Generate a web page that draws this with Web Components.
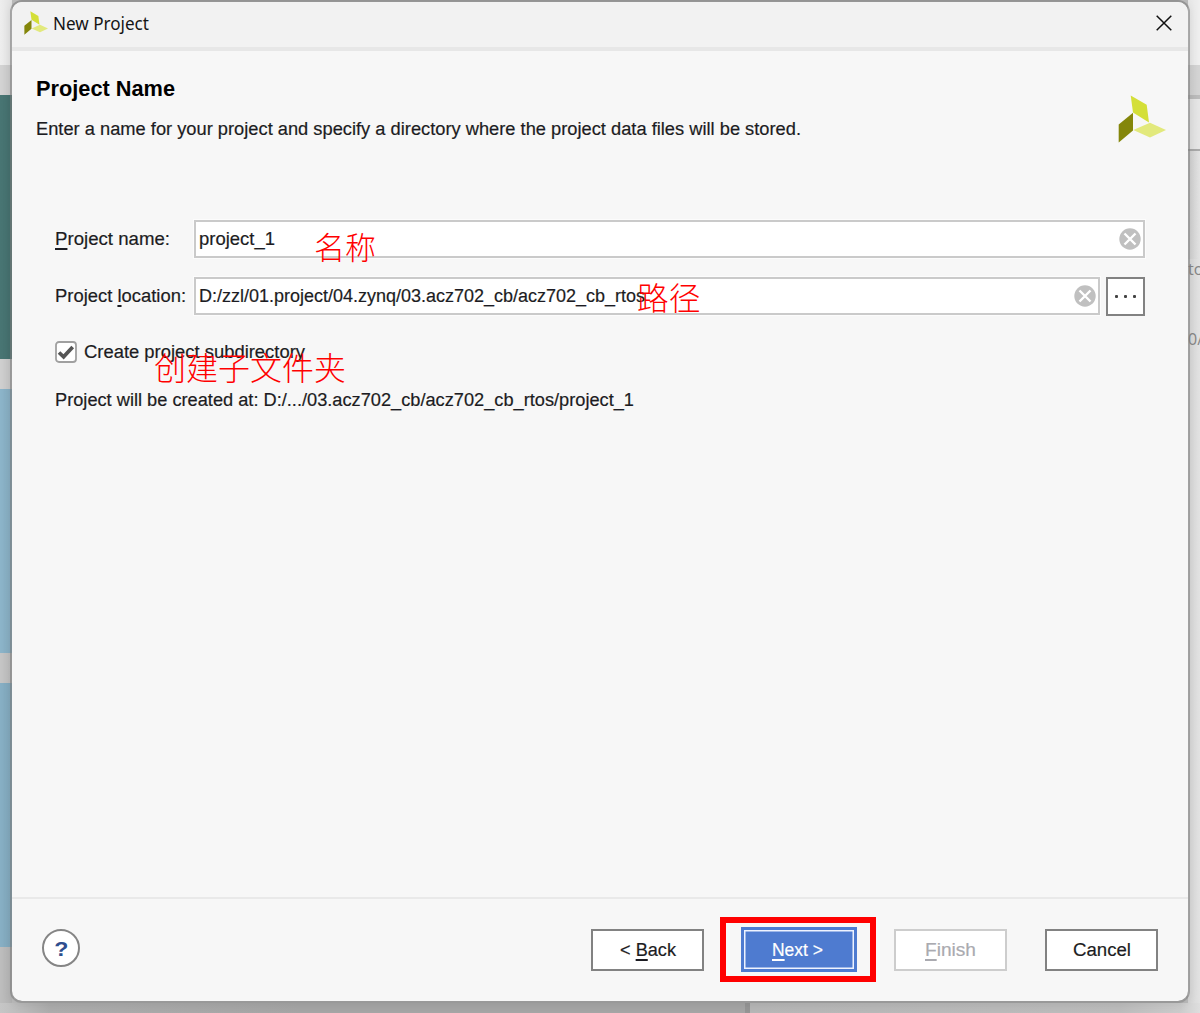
<!DOCTYPE html>
<html lang="en">
<head>
<meta charset="utf-8">
<title>New Project</title>
<style>
html,body{margin:0;width:1200px;height:1013px;overflow:hidden;background:#bbb;font-family:"Liberation Sans",sans-serif}
</style>
</head>
<body>
<project-wizard></project-wizard>
<script>
const define = (name, html, init) => customElements.define(name, class extends HTMLElement {
  connectedCallback() {
    if (this.shadowRoot) return;
    const root = this.attachShadow({mode: 'open'});
    root.innerHTML = html;
    if (init) init.call(this, root);
  }
});

/* Text run condensed or widened to occupy a given width. */
define('fit-text', `<style>
:host{display:inline-block;white-space:pre;font-size:19.2px;line-height:22px;color:#1c1c22;flex:none;-webkit-text-stroke:.2px currentColor}
span{display:inline-block;white-space:pre;transform-origin:0 50%}
</style><span><slot></slot></span>`, function (root) {
  const w = +this.getAttribute('w'), s = root.querySelector('span');
  s.style.transform = 'scaleX(' + w / s.getBoundingClientRect().width + ')';
  this.style.width = w + 'px';
});

define('brand-mark', `<style>:host{display:block;flex:none}svg{display:block;width:100%;height:100%}</style>
<svg viewBox="0 0 48 48" preserveAspectRatio="none"><path fill="#d4df38" d="M10.2 .2Z M12.7 .5 28.7 9.8 31 27.5 15 17.5Z"/><path fill="#84860a" d="M.7 29.5 15 17.8V35.5L.7 47.5Z"/><path fill="#e2e97c" d="M15.3 35 32 27.7 48 35 32 42.5Z"/></svg>`);

define('title-bar', `<style>
:host{display:flex;align-items:center;box-sizing:border-box;height:49px;padding:0 16.5px 3px 12px;background:#f2f2f2;border-bottom:4px solid #e7e7e7}
brand-mark{width:24px;height:24px;margin:-1px 5.5px 0 -.5px}
fit-text{font-family:"Noto Sans","Open Sans",sans-serif;font-size:17.6px;line-height:24px;color:#151515;-webkit-text-stroke:0}
.x{margin-left:auto;width:16px;height:16px}
</style><brand-mark></brand-mark><fit-text w="96"><slot></slot></fit-text>
<svg class="x" viewBox="0 0 16 16"><path d="M.7.7 15.3 15.3M15.3.7.7 15.3" stroke="#111" stroke-width="1.5"/></svg>`);

define('text-field', `<style>
:host{display:flex;flex:1;align-items:center;box-sizing:border-box;height:38px;border:2px solid #cacaca;background:#fff;padding:0 2px 0 3px;box-shadow:0 0 0 1px #fcfcfc}
svg{width:22px;height:22px;margin-left:auto}
</style><slot></slot><svg viewBox="0 0 22 22"><circle cx="11" cy="11" r="10.7" fill="#c0c0c0"/><path d="M5.5 5.5l11 11m0-11l-11 11" stroke="#fff" stroke-width="2.4"/></svg>`);

define('field-row', `<style>
:host{display:flex;align-items:center;height:38px}
.l{width:138px;flex:none;display:flex}
</style><div class="l"><slot name="label"></slot></div><slot></slot>`);

define('check-box', `<style>
:host{display:flex;align-items:center;gap:7px}
svg{width:22px;height:22px;margin-top:1px}
</style><svg viewBox="0 0 22 22"><rect x="1" y="1" width="20" height="20" rx="3" fill="#fff" stroke="#a0a0a0" stroke-width="1.8"/><path d="M4 11.5 8.6 15.8 17.7 6" fill="none" stroke="#555" stroke-width="3.7"/></svg><slot></slot>`);

define('push-button', `<style>
:host{display:flex;align-items:center;justify-content:center;box-sizing:border-box;width:113px;height:42px;border:2px solid #828282;background:#fff;flex:none}
:host([disabled]){border-color:#cdcdcd}
:host([primary]){width:116px;height:45px;border:3px solid #4e7bd0;background:#4e7bd0;box-shadow:inset 0 0 0 1.5px #eef3ff}
:host([browse]){width:39px;height:39px;margin-left:6px}
</style><slot></slot>`);

define('help-button', `<style>
:host{display:flex;align-items:center;justify-content:center;box-sizing:border-box;width:38px;height:38px;border:2px solid #858585;border-radius:50%;background:#fff;color:#2f4e8e;font:bold 21px/32px "Liberation Sans",sans-serif}
span{display:block;transform:scaleX(1.1);margin-top:2px}
</style><span>?</span>`);

define('desktop-strips', `<style>
:host{display:flex;flex-direction:column;width:1200px;height:1013px}
.top{display:flex;height:1003px;justify-content:space-between}
.left,.right{display:flex;flex-direction:column;width:12px}
.left i,.right i{display:block;flex:none;background-image:linear-gradient(90deg,transparent,rgba(0,0,0,.055))}
.right i{background-image:linear-gradient(90deg,rgba(0,0,0,.04),transparent)}
.right{overflow:hidden;background:linear-gradient(90deg,#d4d4d4,#e2e2e2)}
.right span{display:block;height:70px;font:16px/20px "Open Sans",sans-serif;color:#858585;white-space:pre}
.bottom{display:flex;height:10px}
.bottom b{display:block}
</style>
<div class="top"><div class="left">
<i style="height:65px;background-color:#eee"></i><i style="height:30px;background-color:#d3d3d3"></i><i style="height:264px;background-color:#487573"></i><i style="height:30px;background-color:#cfcfcf"></i><i style="height:264px;background-color:#8cb4c9"></i><i style="height:30px;background-color:#c5c5c5"></i><i style="height:264px;background-color:#87afc4"></i><i style="height:56px;background-color:#bdbdbd"></i>
</div><div class="right"><i style="height:65px;background-color:#efefef"></i><i style="height:30px;background-color:#d4d4d4"></i><i style="height:4px;background-color:#bcbcbc"></i><i style="height:50px;background-color:#e6e6e6"></i><i style="height:2px;background-color:#aaa"></i><i style="height:108px"></i><span>to</span><span>0/</span></div></div>
<div class="bottom"><b style="width:745px;background:linear-gradient(90deg,#c6c6c6,#acacac 50px,#a5a5a5 300px,#a5a5a5)"></b><b style="width:5px;background:#959595"></b><b style="flex:1;background:linear-gradient(90deg,#b6b6b6,#bcbcbc 370px,#cbcbcb 430px,#dedede)"></b></div>`);

define('annotation-label', `<style>
:host{position:absolute;font:300 31.7px/36px "Noto Sans CJK SC",sans-serif;color:#f00;white-space:pre}
</style><slot></slot>`);

define('project-wizard', `<style>
:host{display:block;position:relative;width:1200px;height:1013px;overflow:hidden}
u{text-decoration-thickness:1.5px;text-underline-offset:2.5px;text-decoration-skip-ink:none}
.dialog{position:absolute;left:10px;top:0;width:1180px;height:1003px;box-sizing:border-box;border:2px solid rgba(125,125,125,.58);border-bottom-color:#999;border-radius:12px;background:#f7f7f7;background-clip:padding-box;display:flex;flex-direction:column;overflow:hidden;box-shadow:0 2px 8px rgba(0,0,0,.08)}
.head{display:flex;justify-content:space-between;height:169px;padding:0 22px 0 24px}
.copy{display:flex;flex-direction:column;padding-top:26px;gap:17px}
.copy .h{font-weight:bold;font-size:21.3px;line-height:24px;color:#000;-webkit-text-stroke:0}
.head brand-mark{width:48px;height:48px;margin-top:44px}
.form{flex:1;display:flex;flex-direction:column;padding:0 43px}
field-row text-field{margin-left:.5px}
.form .second{margin-top:19px}
check-box{margin-top:25px}
.path{margin-top:26px}
.foot{height:104px;box-sizing:border-box;border-top:2px solid #e9e9e9;display:flex;align-items:center;padding:0 30px 1px}
.buttons{margin-left:auto;display:flex;align-items:center}
.mark{box-sizing:border-box;width:156px;height:65px;border:6px solid #f00;display:flex;justify-content:center;align-items:center;margin:0 18px 0 16px;padding-left:1px}
.help{margin-top:-4px}
.dots{display:flex;gap:6px}.dots i{width:3px;height:3px;background:#444;border-radius:1px}
.dim{color:#aaaab0}.lite{color:#fff;margin-right:3px}
</style>
<desktop-strips></desktop-strips>
<section class="dialog">
<title-bar>New Project</title-bar>
<header class="head"><div class="copy"><fit-text class="h" w="139">Project Name</fit-text><fit-text w="765">Enter a name for your project and specify a directory where the project data files will be stored.</fit-text></div><brand-mark></brand-mark></header>
<main class="form">
<field-row><fit-text slot="label" w="115"><u>P</u>roject name:</fit-text><text-field><fit-text w="76">project_1</fit-text></text-field></field-row>
<field-row class="second"><fit-text slot="label" w="131">Project <u>l</u>ocation:</fit-text><text-field><fit-text w="446">D:/zzl/01.project/04.zynq/03.acz702_cb/acz702_cb_rtos</fit-text></text-field><push-button browse><div class="dots"><i></i><i></i><i></i></div></push-button></field-row>
<check-box><fit-text w="221">Create project subdirectory</fit-text></check-box>
<fit-text class="path" w="579">Project will be created at: D:/.../03.acz702_cb/acz702_cb_rtos/project_1</fit-text>
</main>
<footer class="foot"><help-button class="help"></help-button><div class="buttons">
<push-button><fit-text w="56">&lt; <u>B</u>ack</fit-text></push-button>
<div class="mark"><push-button primary><fit-text class="lite" w="51"><u>N</u>ext &gt;</fit-text></push-button></div>
<push-button disabled><fit-text class="dim" w="51" style="margin-right:1px"><u>F</u>inish</fit-text></push-button>
<push-button style="margin-left:38px"><fit-text w="58">Cancel</fit-text></push-button>
</div></footer>
</section>
<annotation-label style="left:314px;top:228px;font-size:31px">名称</annotation-label>
<annotation-label style="left:637px;top:278px">路径</annotation-label>
<annotation-label style="left:154px;top:348px;font-size:32px">创建子文件夹</annotation-label>`);
</script>
</body>
</html>
